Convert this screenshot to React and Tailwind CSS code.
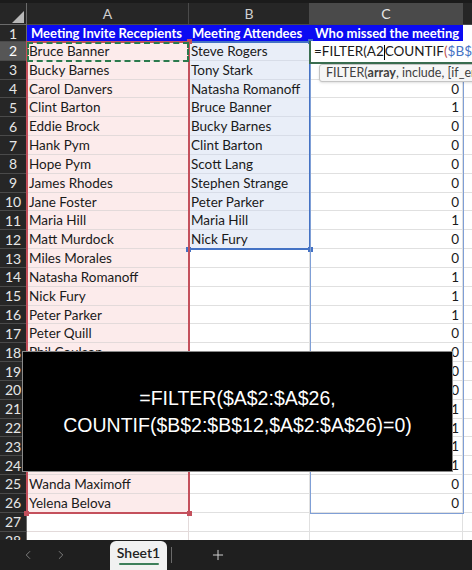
import { ChevronLeft, ChevronRight, Plus } from "lucide-react";

const invitees = {
  2: "Bruce Banner",
  3: "Bucky Barnes",
  4: "Carol Danvers",
  5: "Clint Barton",
  6: "Eddie Brock",
  7: "Hank Pym",
  8: "Hope Pym",
  9: "James Rhodes",
  10: "Jane Foster",
  11: "Maria Hill",
  12: "Matt Murdock",
  13: "Miles Morales",
  14: "Natasha Romanoff",
  15: "Nick Fury",
  16: "Peter Parker",
  17: "Peter Quill",
  18: "Phil Coulson",
  19: "Pietro Maximoff",
  20: "Sam Wilson",
  21: "Scott Lang",
  22: "Stephen Strange",
  23: "Steve Rogers",
  24: "Tony Stark",
  25: "Wanda Maximoff",
  26: "Yelena Belova",
};

const attendees = {
  2: "Steve Rogers",
  3: "Tony Stark",
  4: "Natasha Romanoff",
  5: "Bruce Banner",
  6: "Bucky Barnes",
  7: "Clint Barton",
  8: "Scott Lang",
  9: "Stephen Strange",
  10: "Peter Parker",
  11: "Maria Hill",
  12: "Nick Fury",
};

// countif results shown in column C (C3 sits under the tooltip)
const counts = {
  4: 0, 5: 1, 6: 0, 7: 0, 8: 0, 9: 0, 10: 0, 11: 1, 12: 0, 13: 0,
  14: 1, 15: 1, 16: 1, 17: 0, 18: 0, 19: 0, 20: 0, 21: 1, 22: 1, 23: 1,
  24: 1, 25: 0, 26: 0,
};

const rows = Array.from({ length: 27 }, (_, i) => i + 2);

function Corner() {
  return (
    <svg width="26" height="22" viewBox="0 0 26 22">
      <polygon points="12,20 24,20 24,8" fill="#b8b8b8" />
    </svg>
  );
}

export default function App() {
  return (
    <div className="relative w-[472px] h-[570px] overflow-hidden bg-white font-['Lato','Noto_Sans',sans-serif] text-[13.5px] text-[#1a1a1a]">
      <div className="h-[540px] overflow-hidden">
        <div className="h-[3px] bg-[#1b1b1b]" />

        {/* column headers */}
        <div className="flex h-[22px] bg-[#262626] text-[14px] text-[#cfcfcf]">
          <div className="w-[27px] shrink-0 border-r border-b border-[#6b6b6b]">
            <Corner />
          </div>
          <div className="w-[162px] shrink-0 flex items-center justify-center border-r border-b border-[#4a4a4a]">A</div>
          <div className="w-[121px] shrink-0 flex items-center justify-center border-r border-b border-[#4a4a4a]">B</div>
          <div className="w-[153px] shrink-0 flex items-center justify-center border-r border-b border-[#4a4a4a] bg-[#4a4a4a] text-[#e8e8e8]">C</div>
          <div className="flex-1 border-b border-[#4a4a4a]" />
        </div>

        {/* row 1 headers */}
        <div className="flex h-[17px]">
          <div className="w-[27px] shrink-0 flex items-center justify-center bg-[#262626] text-[14px] text-[#e6e6e6] border-r border-r-[#6b6b6b] border-b border-b-[#4a4a4a]">1</div>
          <div className="w-[162px] shrink-0 bg-[#0b0bf2] text-[13px] text-white font-bold leading-[17px] px-[4px] whitespace-nowrap">Meeting Invite Recepients</div>
          <div className="w-[121px] shrink-0 bg-[#0b0bf2] text-[13px] text-white font-bold leading-[17px] px-[3px] whitespace-nowrap overflow-hidden">Meeting Attendees</div>
          <div className="w-[153px] shrink-0 bg-[#0b0bf2] text-[13px] text-white font-bold leading-[17px] px-[5px] whitespace-nowrap overflow-hidden">Who missed the meeting</div>
          <div className="flex-1 border-b border-[#e0e0e0]" />
        </div>

        {rows.map((r) => (
          <div key={r} className="flex h-[18.84px]">
            <div
              className={`w-[27px] shrink-0 flex items-center justify-center text-[14px] border-r border-r-[#6b6b6b] border-b border-b-[#4a4a4a] ${
                r === 2 ? "bg-[#565656] text-white" : "bg-[#262626] text-[#e6e6e6]"
              }`}
            >
              {r}
            </div>
            <div
              className={`w-[162px] shrink-0 border-r border-b border-[#e3dada] leading-[18px] px-[2px] whitespace-nowrap overflow-hidden ${
                r <= 26 ? "bg-[#fcebeb]" : "bg-white border-[#e0e0e0]"
              }`}
            >
              {invitees[r]}
            </div>
            <div
              className={`w-[121px] shrink-0 border-r border-b leading-[18px] px-[2px] whitespace-nowrap overflow-hidden ${
                r <= 12 ? "bg-[#e9eef8] border-[#d8dde8]" : "bg-white border-[#e0e0e0]"
              }`}
            >
              {attendees[r]}
            </div>
            <div className="w-[153px] shrink-0 border-r border-b border-[#e0e0e0] leading-[18px] px-[3px] text-right">
              {counts[r]}
            </div>
            <div className="flex-1 border-b border-[#e0e0e0]" />
          </div>
        ))}
      </div>

      {/* sheet tabs */}
      <div className="flex h-[30px] items-stretch bg-[#1f1f1f]">
        <div className="flex w-[110px] items-center pl-[21px] gap-[19px] text-[#8a8a8a]">
          <ChevronLeft size={14} strokeWidth={1.5} />
          <ChevronRight size={14} strokeWidth={1.5} />
        </div>
        <div className="mt-[1px] flex w-[57px] flex-col items-center rounded-t-[6px] bg-[#f1f1f1] pt-[3px]">
          <span className="text-[14px] font-semibold leading-[18px] text-[#222]">Sheet1</span>
          <span className="mt-[1px] h-[2px] w-[40px] rounded bg-[#3d7f5a]" />
        </div>
        <div className="ml-[4px] my-[7px] w-px bg-[#6a6a6a]" />
        <div className="ml-[38px] flex items-center text-[#cfcfcf]">
          <Plus size={16} strokeWidth={1.5} />
        </div>
      </div>

      {/* formula range highlights */}
      <div className="absolute left-[188px] top-[41px] w-[123px] h-[209px] border-2 border-[#4472c4]">
        <span className="absolute -right-[4px] -top-[4px] size-[5px] bg-[#4472c4]" />
        <span className="absolute -left-[4px] -bottom-[4px] size-[5px] bg-[#4472c4]" />
        <span className="absolute -right-[4px] -bottom-[4px] size-[5px] bg-[#4472c4]" />
      </div>
      <div className="absolute left-[26px] top-[41px] w-[164px] h-[473px] border-2 border-[#c4505c]">
        <span className="absolute -right-[4px] -top-[4px] size-[5px] bg-[#c4505c]" />
        <span className="absolute -left-[4px] -bottom-[4px] size-[5px] bg-[#c4505c]" />
        <span className="absolute -right-[4px] -bottom-[4px] size-[5px] bg-[#c4505c]" />
      </div>
      <div className="absolute left-[310px] top-[42px] w-[154px] h-[472px] border border-[#7f9fd6]" />
      <div className="absolute left-[27px] top-[42px] w-[162px] h-[20px] border-2 border-dashed border-[#2a7a4c]" />

      {/* cell being edited */}
      <div className="absolute left-[309px] top-[41px] right-0 h-[23px] bg-white border-l-2 border-b-2 border-[#3a6e50] leading-[20px] pl-[3px] whitespace-nowrap overflow-hidden">
        <span>=FILTER(A2</span>
        <span className="inline-block h-[15px] w-px bg-black align-middle" />
        <span>COUNTIF</span>
        <span className="text-[#c0504d]">(</span>
        <span className="text-[#4472c4]">$B$2:$B$12</span>
      </div>
      <div className="absolute left-[319px] top-[64px] right-[-30px] h-[18px] bg-[#f6f6f6] border border-[#c4c4c4] rounded-[3px] shadow-sm pl-[6px] text-[12.5px] leading-[16px] text-[#404040] whitespace-nowrap overflow-hidden">
        FILTER(<span className="font-bold">array</span>, include, [if_empty])
      </div>

      {/* caption box */}
      <div className="absolute left-[22px] top-[351px] w-[431px] h-[121px] bg-black border border-[#8a8a8a] flex flex-col items-center justify-center font-['Liberation_Sans',Arial,sans-serif] text-[19.5px] leading-[27px] text-white">
        <span>=FILTER($A$2:$A$26,</span>
        <span>COUNTIF($B$2:$B$12,$A$2:$A$26)=0)</span>
      </div>
    </div>
  );
}
